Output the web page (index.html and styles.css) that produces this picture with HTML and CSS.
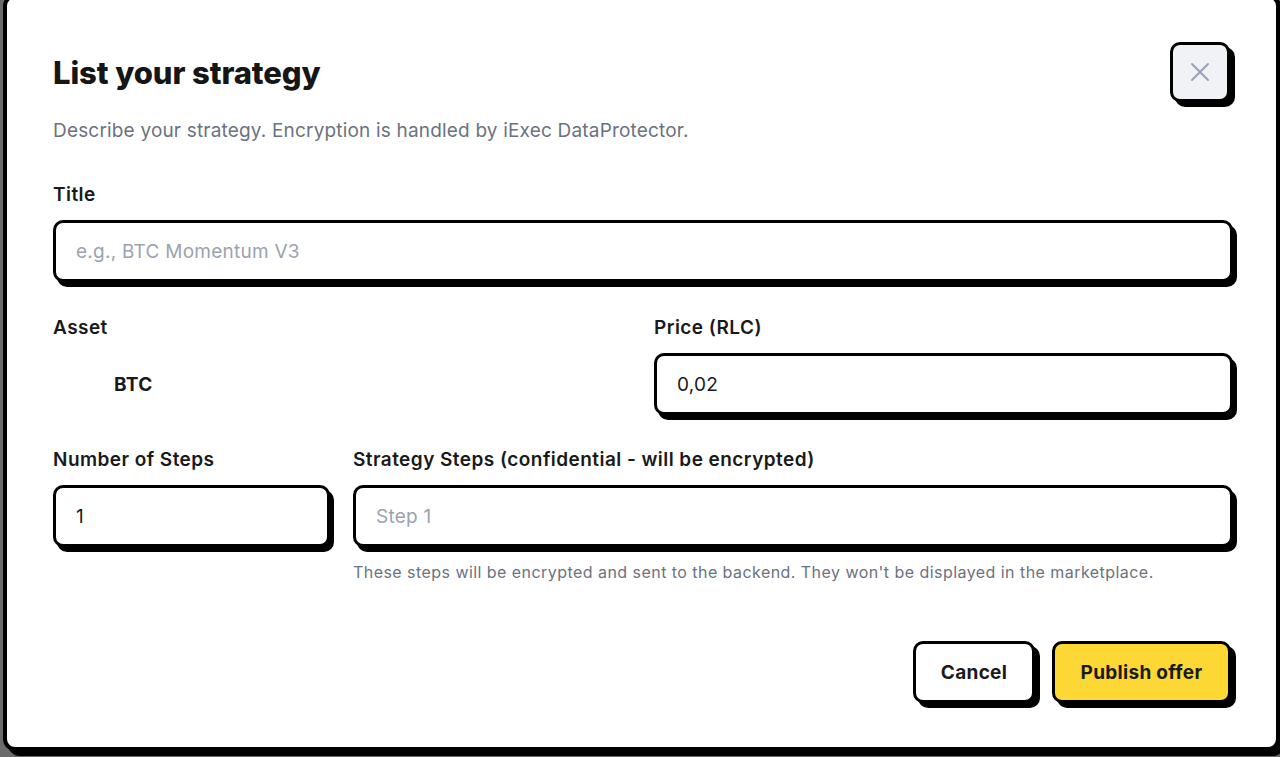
FILE: index.html
```html
<!DOCTYPE html>
<html lang="en">
<head>
<meta charset="utf-8">
<title>List your strategy</title>
<link rel="stylesheet" href="styles.css">
</head>
<body>
<div class="modal">
  <div class="header">
    <div class="heading">
      <h1 class="title">List your strategy</h1>
      <p class="subtitle">Describe your strategy. Encryption is handled by iExec DataProtector.</p>
    </div>
    <button class="close" aria-label="Close">
      <svg width="22" height="22" viewBox="0 0 22 22" fill="none" stroke="#94a3b8" stroke-width="2" stroke-linecap="round"><path d="M3 3 L19 19 M19 3 L3 19"/></svg>
    </button>
  </div>

  <div class="field field-title">
    <label class="label">Title</label>
    <div class="input placeholder">e.g., BTC Momentum V3</div>
  </div>

  <div class="row row-two">
    <div class="field">
      <label class="label">Asset</label>
      <div class="asset">BTC</div>
    </div>
    <div class="field">
      <label class="label">Price (RLC)</label>
      <div class="input">0,02</div>
    </div>
  </div>

  <div class="row row-steps">
    <div class="field">
      <label class="label">Number of Steps</label>
      <div class="input">1</div>
    </div>
    <div class="field">
      <label class="label">Strategy Steps (confidential - will be encrypted)</label>
      <div class="input placeholder">Step 1</div>
      <p class="help">These steps will be encrypted and sent to the backend. They won't be displayed in the marketplace.</p>
    </div>
  </div>

  <div class="actions">
    <button class="btn btn-cancel">Cancel</button>
    <button class="btn btn-primary">Publish offer</button>
  </div>
</div>
</body>
</html>
```

FILE: styles.css
```css
* { box-sizing: border-box; }
html, body { margin: 0; padding: 0; }
body {
  background: #6b6b6b;
  font-family: Inter, "Noto Sans", sans-serif;
  color: #111111;
  height: 757px;
  overflow: hidden;
}
.modal {
  margin-left: 3px;
  margin-top: -6px;
  width: 1277px;
  background: #ffffff;
  border: 4px solid #000000;
  border-radius: 12px;
  box-shadow: 5px 5px 0 #000000;
  padding: 44px 43px 44px 46px;
}
.header {
  display: flex;
  justify-content: space-between;
  align-items: flex-start;
}
.title {
  margin: 13px 0 0 0;
  font-size: 31px;
  line-height: 36px;
  font-weight: 800;
  letter-spacing: -0.1px;
  color: #161616;
}
.subtitle {
  margin: 26px 0 0 0;
  font-size: 19px;
  line-height: 28px;
  letter-spacing: 0.18px;
  color: #6b7280;
}
.close {
  width: 60px;
  height: 60px;
  margin-right: 3px;
  background: #f1f2f5;
  border: 3px solid #000000;
  border-radius: 10px;
  box-shadow: 5px 5px 0 #000000;
  display: flex;
  align-items: center;
  justify-content: center;
  padding: 0;
}
.field { display: flex; flex-direction: column; }
.field-title { margin-top: 35px; }
.label {
  font-size: 19px;
  line-height: 28px;
  padding-top: 1px;
  font-weight: 600;
  letter-spacing: 0.45px;
  color: #1a1a1a;
  margin-bottom: 11px;
}
.input {
  height: 62px;
  border: 3px solid #000000;
  border-radius: 10px;
  box-shadow: 4px 5px 0 #000000;
  display: flex;
  align-items: center;
  padding: 0 20px;
  font-size: 19px;
  letter-spacing: 0.25px;
  color: #1a1a1a;
  background: #ffffff;
}
.input.placeholder { color: #9ca3af; }
.row { display: grid; column-gap: 22px; }
.row-two { grid-template-columns: 1fr 1fr; margin-top: 31px; }
.row-steps { grid-template-columns: 277px 1fr; column-gap: 23px; margin-top: 30px; }
.asset {
  height: 62px;
  display: flex;
  align-items: center;
  padding-left: 61px;
  font-size: 19px;
  letter-spacing: 0.3px;
  font-weight: 700;
  color: #1a1a1a;
}
.help {
  margin: 14px 0 0 0;
  font-size: 16px;
  line-height: 22px;
  letter-spacing: 0.45px;
  color: #6b7280;
}
.actions {
  display: flex;
  justify-content: flex-end;
  gap: 17px;
  margin-top: 58px;
  padding-right: 2px;
}
.btn {
  height: 62px;
  border: 3px solid #000000;
  border-radius: 10px;
  box-shadow: 5px 5px 0 #000000;
  font-family: Inter, "Noto Sans", sans-serif;
  font-size: 19px;
  font-weight: 700;
  letter-spacing: 0.3px;
  color: #1a1a1a;
  padding: 0;
}
.btn-cancel { background: #ffffff; width: 122px; }
.btn-primary { background: #fdd835; width: 179px; }
```
